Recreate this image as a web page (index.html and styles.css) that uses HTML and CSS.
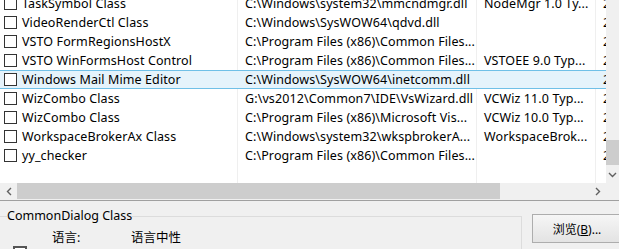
FILE: index.html
```html
<!DOCTYPE html>
<html lang="zh-CN">
<head>
  <meta charset="UTF-8">
  <title>COM 组件</title>
  <link rel="stylesheet" href="styles.css">
</head>
<body>
  <div class="window">
    <div class="list-area">
      <div class="list">
        <div class="rows">
          <div class="row">
            <div class="cell name"><span class="check"></span>TaskSymbol Class</div>
            <div class="cell">C:\Windows\system32\mmcndmgr.dll</div>
            <div class="cell">NodeMgr 1.0 Ty...</div>
            <div class="cell">2</div>
          </div>
          <div class="row">
            <div class="cell name"><span class="check"></span>VideoRenderCtl Class</div>
            <div class="cell">C:\Windows\SysWOW64\qdvd.dll</div>
            <div class="cell"></div>
            <div class="cell">2</div>
          </div>
          <div class="row">
            <div class="cell name"><span class="check"></span>VSTO FormRegionsHostX</div>
            <div class="cell">C:\Program Files (x86)\Common Files...</div>
            <div class="cell"></div>
            <div class="cell">2</div>
          </div>
          <div class="row">
            <div class="cell name"><span class="check"></span>VSTO WinFormsHost Control</div>
            <div class="cell">C:\Program Files (x86)\Common Files...</div>
            <div class="cell">VSTOEE 9.0 Typ...</div>
            <div class="cell">2</div>
          </div>
          <div class="row hot">
            <div class="cell name"><span class="check"></span>Windows Mail Mime Editor</div>
            <div class="cell">C:\Windows\SysWOW64\inetcomm.dll</div>
            <div class="cell"></div>
            <div class="cell">2</div>
          </div>
          <div class="row">
            <div class="cell name"><span class="check"></span>WizCombo Class</div>
            <div class="cell">G:\vs2012\Common7\IDE\VsWizard.dll</div>
            <div class="cell">VCWiz 11.0 Typ...</div>
            <div class="cell">2</div>
          </div>
          <div class="row">
            <div class="cell name"><span class="check"></span>WizCombo Class</div>
            <div class="cell">C:\Program Files (x86)\Microsoft Vis...</div>
            <div class="cell">VCWiz 10.0 Typ...</div>
            <div class="cell">2</div>
          </div>
          <div class="row">
            <div class="cell name"><span class="check"></span>WorkspaceBrokerAx Class</div>
            <div class="cell">C:\Windows\system32\wkspbrokerA...</div>
            <div class="cell">WorkspaceBrok...</div>
            <div class="cell">2</div>
          </div>
          <div class="row">
            <div class="cell name"><span class="check"></span>yy_checker</div>
            <div class="cell">C:\Program Files (x86)\Common Files...</div>
            <div class="cell"></div>
            <div class="cell">2</div>
          </div>
          <div class="row filler">
            <div class="cell"></div>
            <div class="cell"></div>
            <div class="cell"></div>
            <div class="cell"></div>
          </div>
        </div>
      </div>

      <div class="vscroll">
        <div class="vtrack"></div>
        <div class="vthumb"></div>
        <div class="arrow">
          <svg width="9" height="6" viewBox="0 0 9 6"><polyline points="1,1 4.5,4.5 8,1" fill="none" stroke="#606060" stroke-width="1.4"/></svg>
        </div>
      </div>
    </div>

    <div class="hscroll-row">
      <div class="hscroll">
        <div class="arrow">
          <svg width="6" height="9" viewBox="0 0 6 9"><polyline points="5,1 1.5,4.5 5,8" fill="none" stroke="#606060" stroke-width="1.4"/></svg>
        </div>
        <div class="hthumb"></div>
        <div class="htrack"></div>
        <div class="arrow">
          <svg width="6" height="9" viewBox="0 0 6 9"><polyline points="1,1 4.5,4.5 1,8" fill="none" stroke="#606060" stroke-width="1.4"/></svg>
        </div>
      </div>
      <div class="corner"></div>
    </div>

    <div class="details">
      <fieldset class="group">
        <legend>CommonDialog Class</legend>
        <div class="group-body">
          <span class="file-icon"></span>
          <div class="props">
            <span class="label">语言:</span>
            <span class="value">语言中性</span>
          </div>
        </div>
      </fieldset>
      <button class="browse">浏览(<u>B</u>)...</button>
    </div>
  </div>
</body>
</html>
```

FILE: styles.css
```css
:root {
  --face: #f0f0f0;
  --grid-line: #efefef;
  --hot-fill: #e5f3fb;
  --hot-border: #70c0e7;
  --thumb: #cdcdcd;
  --font-ui: "Noto Sans", "Noto Sans CJK SC", sans-serif;
}

* {
  margin: 0;
  padding: 0;
  box-sizing: border-box;
}

body {
  width: 619px;
  height: 249px;
  overflow: hidden;
  background: var(--face);
  font-family: var(--font-ui);
  font-size: 12.5px;
  color: #000;
}

.window {
  width: 623px;
}

/* list view */
.list-area {
  display: flex;
  height: 183px;
}

.list {
  width: 606px;
  background: #fff;
  overflow: hidden;
}

.rows {
  display: flex;
  flex-direction: column;
  height: 189px;
  margin-top: -6px;
}

.row {
  display: grid;
  grid-template-columns: 238px 239px 119px 1fr;
  height: 19px;
  line-height: 19px;
}

.row.filler {
  flex: 1;
}

.cell {
  padding-left: 7px;
  white-space: nowrap;
  overflow: hidden;
  letter-spacing: 0.1px;
  border-right: 1px solid var(--grid-line);
}

.cell:last-child {
  border-right: none;
}

.cell.name {
  display: flex;
  align-items: center;
  padding-left: 4px;
}

.check {
  flex: none;
  width: 13px;
  height: 13px;
  margin-right: 5px;
  border: 1px solid #333;
  background: #fff;
}

.row.hot {
  background: var(--hot-fill);
  border-top: 1px solid var(--hot-border);
  border-bottom: 1px solid var(--hot-border);
  line-height: 17px;
}

.row.hot .cell {
  border-right-color: transparent;
}

/* scroll bars */
.vscroll {
  width: 17px;
  display: flex;
  flex-direction: column;
  background: var(--face);
}

.vtrack {
  flex: 1;
}

.vthumb {
  height: 25px;
  margin: 0 1px 1px 0;
  background: var(--thumb);
}

.arrow {
  flex: none;
  width: 17px;
  height: 17px;
  display: flex;
  align-items: center;
  justify-content: center;
}

.vscroll .arrow svg {
  margin-left: -4px;
}

.hscroll-row {
  display: flex;
  height: 17px;
  border-bottom: 1px solid #a0a0a0;
  box-sizing: content-box;
}

.hscroll {
  width: 606px;
  display: flex;
  background: var(--face);
}

.hthumb {
  width: 483px;
  margin: 0 0 1px;
  background: var(--thumb);
}

.htrack {
  flex: 1;
}

.corner {
  width: 17px;
  background: var(--face);
}

/* details panel */
.details {
  display: flex;
  align-items: flex-start;
  padding-top: 7px;
}

.group {
  width: 523px;
  height: 60px;
  margin-left: -1px;
  border: 1px solid #dcdcdc;
  padding: 0 0 0 7px;
}

.group legend {
  padding: 0;
  line-height: 16px;
}

.group-body {
  display: flex;
  padding-top: 6px;
}

.file-icon {
  width: 14px;
  height: 16px;
  margin: 16px 0 0 6px;
  border: 2px solid #555;
  background: #fff;
}

.props {
  display: flex;
  margin-left: 25px;
  line-height: 16px;
}

.label {
  width: 79px;
}

.browse {
  width: 90px;
  height: 29px;
  margin: 6px 0 0 10px;
  border: 1px solid #adadad;
  background: linear-gradient(#f6f6f6, #e3e3e3);
  font-family: var(--font-ui);
  font-size: 12px;
  color: #000;
}
```
